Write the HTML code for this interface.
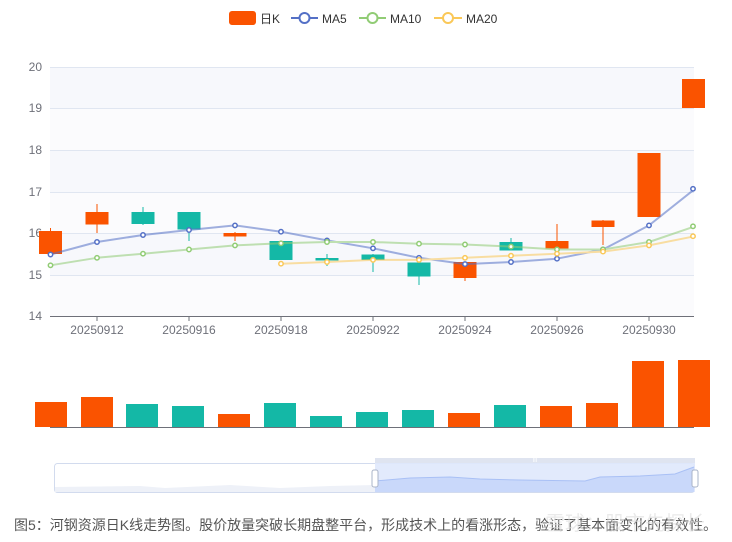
<!DOCTYPE html>
<html><head><meta charset="utf-8"><style>
body{margin:0;background:#fff;width:732px;height:542px;overflow:hidden;font-family:"Liberation Sans","Noto Sans CJK SC",sans-serif}
</style></head><body>
<svg width="732" height="542" xmlns="http://www.w3.org/2000/svg" style="position:absolute;left:0;top:0">
<!-- legend -->
<rect x="229" y="11" width="27" height="14" rx="3" fill="#fa5300"/>
<text x="260" y="23" font-size="12" fill="#333" font-family="Liberation Sans,Noto Sans CJK SC,sans-serif">日K</text>
<line x1="291" y1="18" x2="318" y2="18" stroke="#5470c6" stroke-width="2"/><circle cx="304.5" cy="18" r="5" fill="#fff" stroke="#5470c6" stroke-width="2"/>
<text x="322" y="23" font-size="12" fill="#333">MA5</text>
<line x1="359" y1="18" x2="386" y2="18" stroke="#91cc75" stroke-width="2"/><circle cx="372.5" cy="18" r="5" fill="#fff" stroke="#91cc75" stroke-width="2"/>
<text x="390" y="23" font-size="12" fill="#333">MA10</text>
<line x1="434" y1="18" x2="462" y2="18" stroke="#fac858" stroke-width="2"/><circle cx="448" cy="18" r="5" fill="#fff" stroke="#fac858" stroke-width="2"/>
<text x="466" y="23" font-size="12" fill="#333">MA20</text>
<!-- plot bg bands -->
<rect x="50" y="67" width="644" height="41" fill="#f7f8fc"/>
<rect x="50" y="108" width="644" height="42" fill="#fbfbfd"/>
<rect x="50" y="150" width="644" height="42" fill="#f7f8fc"/>
<rect x="50" y="192" width="644" height="41" fill="#fbfbfd"/>
<rect x="50" y="233" width="644" height="42" fill="#f7f8fc"/>
<rect x="50" y="275" width="644" height="41" fill="#fbfbfd"/>
<g stroke="#e0e6f1" stroke-width="1">
<line x1="50" y1="67.5" x2="694" y2="67.5"/><line x1="50" y1="108.5" x2="694" y2="108.5"/><line x1="50" y1="150.5" x2="694" y2="150.5"/><line x1="50" y1="192.5" x2="694" y2="192.5"/><line x1="50" y1="233.5" x2="694" y2="233.5"/><line x1="50" y1="275.5" x2="694" y2="275.5"/>
</g>
<line x1="50" y1="316.5" x2="694" y2="316.5" stroke="#6e7079"/>
<g stroke="#6e7079"><line x1="97" y1="316" x2="97" y2="321"/><line x1="189" y1="316" x2="189" y2="321"/><line x1="281" y1="316" x2="281" y2="321"/><line x1="373" y1="316" x2="373" y2="321"/><line x1="465" y1="316" x2="465" y2="321"/><line x1="557" y1="316" x2="557" y2="321"/><line x1="649" y1="316" x2="649" y2="321"/></g>
<g font-size="12" fill="#6e7079" text-anchor="end">
<text x="42" y="71">20</text><text x="42" y="112">19</text><text x="42" y="154">18</text><text x="42" y="196">17</text><text x="42" y="237">16</text><text x="42" y="279">15</text><text x="42" y="320">14</text>
</g>
<g font-size="12" fill="#6e7079" text-anchor="middle">
<text x="97" y="334">20250912</text><text x="189" y="334">20250916</text><text x="281" y="334">20250918</text><text x="373" y="334">20250922</text><text x="465" y="334">20250924</text><text x="557" y="334">20250926</text><text x="649" y="334">20250930</text>
</g>
<!-- candles -->
<g stroke-width="1">
<line x1="50.5" y1="228" x2="50.5" y2="254" stroke="#fa5300"/><rect x="39" y="231" width="23" height="23" fill="#fa5300"/>
<line x1="97" y1="204" x2="97" y2="233" stroke="#fa5300"/><rect x="85.5" y="212" width="23" height="12.5" fill="#fa5300"/>
<line x1="143" y1="207" x2="143" y2="225" stroke="#14b8a6"/><rect x="131.5" y="212" width="23" height="12" fill="#14b8a6"/>
<line x1="189" y1="212" x2="189" y2="241" stroke="#14b8a6"/><rect x="177.5" y="212" width="23" height="17.5" fill="#14b8a6"/>
<line x1="235" y1="232" x2="235" y2="241" stroke="#fa5300"/><rect x="223.5" y="233" width="23" height="3.5" fill="#fa5300"/>
<rect x="269.5" y="241" width="23" height="19" fill="#14b8a6"/>
<line x1="327" y1="254" x2="327" y2="266" stroke="#14b8a6"/><rect x="315.5" y="258" width="23" height="2.5" fill="#14b8a6"/>
<line x1="373" y1="254" x2="373" y2="272" stroke="#14b8a6"/><rect x="361.5" y="254.5" width="23" height="5.5" fill="#14b8a6"/>
<line x1="419" y1="262" x2="419" y2="285" stroke="#14b8a6"/><rect x="407.5" y="262.5" width="23" height="14" fill="#14b8a6"/>
<line x1="465" y1="262" x2="465" y2="281" stroke="#fa5300"/><rect x="453.5" y="262" width="23" height="16" fill="#fa5300"/>
<line x1="511" y1="238" x2="511" y2="250" stroke="#14b8a6"/><rect x="499.5" y="242" width="23" height="8.5" fill="#14b8a6"/>
<line x1="557" y1="224" x2="557" y2="249" stroke="#fa5300"/><rect x="545.5" y="241" width="23" height="7.5" fill="#fa5300"/>
<line x1="603" y1="220" x2="603" y2="245" stroke="#fa5300"/><rect x="591.5" y="220.5" width="23" height="6.5" fill="#fa5300"/>
<rect x="637.5" y="153" width="23" height="64" fill="#fa5300"/>
<rect x="682" y="79" width="23" height="29" fill="#fa5300"/>
</g>
<!-- MA lines -->
<g fill="none" stroke-width="2" stroke-linejoin="round" opacity="0.55">
<polyline stroke="#5470c6" points="50.5,254.5 97,242 143,235 189,230 235,225.4 281,231.7 327,240.4 373,248.3 419,257.8 465,264.1 511,262 557,258.7 603,249.5 649,225.4 695,188.8"/>
<polyline stroke="#91cc75" points="50.5,265.3 97,257.8 143,253.7 189,249.5 235,245.4 281,243.3 327,242 373,242 419,243.7 465,244.5 511,246.6 557,249.5 603,249.5 649,242 695,226.3"/>
<polyline stroke="#fac858" points="281,263.7 327,262 373,259.9 419,259.9 465,257.8 511,255.7 557,253.7 603,251.6 649,245.4 695,236.2"/>
</g>
<g fill="#fff" stroke-width="1.5">
<g stroke="#5470c6"><circle cx="50.5" cy="254.5" r="2.2"/><circle cx="97" cy="242" r="2.2"/><circle cx="143" cy="235" r="2.2"/><circle cx="189" cy="230" r="2.2"/><circle cx="235" cy="225.4" r="2.2"/><circle cx="281" cy="231.7" r="2.2"/><circle cx="327" cy="240.4" r="2.2"/><circle cx="373" cy="248.3" r="2.2"/><circle cx="419" cy="257.8" r="2.2"/><circle cx="465" cy="264.1" r="2.2"/><circle cx="511" cy="262" r="2.2"/><circle cx="557" cy="258.7" r="2.2"/><circle cx="603" cy="249.5" r="2.2"/><circle cx="649" cy="225.4" r="2.2"/><circle cx="693" cy="188.8" r="2.2"/></g>
<g stroke="#91cc75"><circle cx="50.5" cy="265.3" r="2.2"/><circle cx="97" cy="257.8" r="2.2"/><circle cx="143" cy="253.7" r="2.2"/><circle cx="189" cy="249.5" r="2.2"/><circle cx="235" cy="245.4" r="2.2"/><circle cx="281" cy="243.3" r="2.2"/><circle cx="327" cy="242" r="2.2"/><circle cx="373" cy="242" r="2.2"/><circle cx="419" cy="243.7" r="2.2"/><circle cx="465" cy="244.5" r="2.2"/><circle cx="511" cy="246.6" r="2.2"/><circle cx="557" cy="249.5" r="2.2"/><circle cx="603" cy="249.5" r="2.2"/><circle cx="649" cy="242" r="2.2"/><circle cx="693" cy="226.3" r="2.2"/></g>
<g stroke="#fac858"><circle cx="281" cy="263.7" r="2.2"/><circle cx="327" cy="262" r="2.2"/><circle cx="373" cy="259.9" r="2.2"/><circle cx="419" cy="259.9" r="2.2"/><circle cx="465" cy="257.8" r="2.2"/><circle cx="511" cy="255.7" r="2.2"/><circle cx="557" cy="253.7" r="2.2"/><circle cx="603" cy="251.6" r="2.2"/><circle cx="649" cy="245.4" r="2.2"/><circle cx="693" cy="236.2" r="2.2"/></g>
</g>
<!-- volume -->
<g>
<rect x="35" y="402" width="32" height="25" fill="#fa5300"/>
<rect x="81" y="397" width="32" height="30" fill="#fa5300"/>
<rect x="126" y="404" width="32" height="23" fill="#14b8a6"/>
<rect x="172" y="406" width="32" height="21" fill="#14b8a6"/>
<rect x="218" y="414" width="32" height="13" fill="#fa5300"/>
<rect x="264" y="403" width="32" height="24" fill="#14b8a6"/>
<rect x="310" y="416" width="32" height="11" fill="#14b8a6"/>
<rect x="356" y="412" width="32" height="15" fill="#14b8a6"/>
<rect x="402" y="410" width="32" height="17" fill="#14b8a6"/>
<rect x="448" y="413" width="32" height="14" fill="#fa5300"/>
<rect x="494" y="405" width="32" height="22" fill="#14b8a6"/>
<rect x="540" y="406" width="32" height="21" fill="#fa5300"/>
<rect x="586" y="403" width="32" height="24" fill="#fa5300"/>
<rect x="632" y="361" width="32" height="66" fill="#fa5300"/>
<rect x="678" y="360" width="32" height="67" fill="#fa5300"/>
</g>
<line x1="50" y1="427.5" x2="694" y2="427.5" stroke="#6e7079"/>
<!-- datazoom -->
<rect x="54.5" y="463.5" width="640" height="29" rx="3" fill="#fff" stroke="#d2dbee"/>
<polygon points="55,487 140,486 165,488 230,485 280,488 330,486 375,485 375,492 55,492" fill="#eef1f8"/>
<rect x="375" y="458" width="320" height="5" fill="#dfe4f0"/>
<rect x="375" y="463" width="320" height="29" fill="#dfe8fc" opacity="0.9"/>
<polygon points="375,481 410,478 450,477 480,479 520,480 585,481 600,477 640,476 675,474 694,467 694,492 375,492" fill="#c9d8fa"/>
<polyline points="375,481 410,478 450,477 480,479 520,480 585,481 600,477 640,476 675,474 694,467" fill="none" stroke="#a9c0f5"/>
<rect x="372" y="470" width="6" height="17" rx="2" fill="#fff" stroke="#aab4c8"/>
<rect x="692" y="470" width="6" height="17" rx="2" fill="#fff" stroke="#aab4c8"/>
<text x="535" y="462" font-size="6" fill="#fff" text-anchor="middle">III</text>
<!-- caption -->
<text x="14" y="530" font-size="14" fill="#555" font-family="Liberation Sans,Noto Sans CJK SC,sans-serif">图5：河钢资源日K线走势图。股价放量突破长期盘整平台，形成技术上的看涨形态，验证了基本面变化的有效性。</text>
<text x="545" y="530" font-size="20" fill="#ddd" opacity="0.6" font-family="Noto Sans CJK SC,sans-serif">雪球：股市先探长</text>
</svg>
</body></html>
